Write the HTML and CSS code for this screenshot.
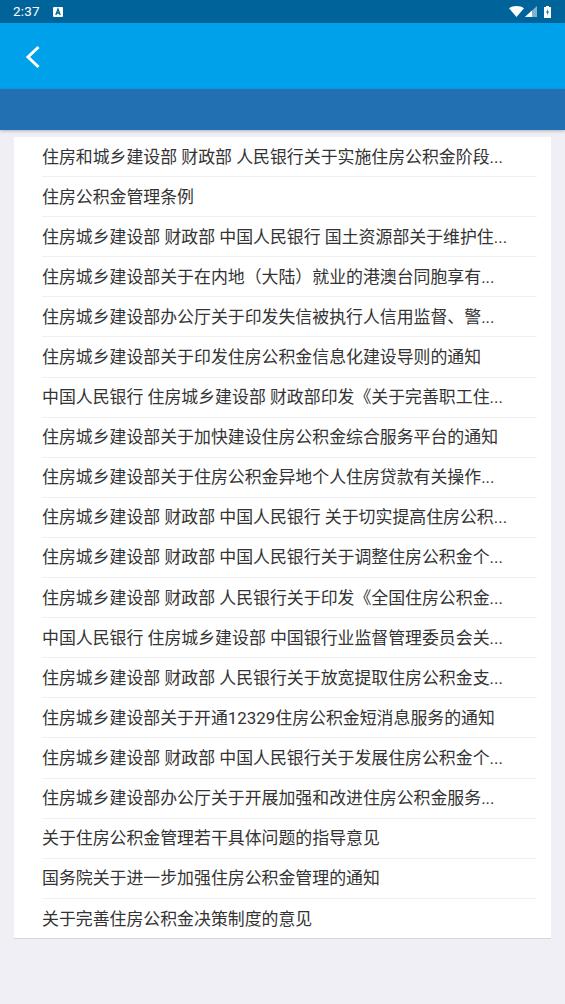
FILE: index.html
```html
<!DOCTYPE html>
<html lang="zh-CN">
<head>
<meta charset="utf-8">
<title>住房公积金政策</title>
<link rel="stylesheet" href="styles.css">
</head>
<body>
<div class="status">
  <span class="time">2:37</span>
  <svg class="a-icon" width="10" height="10" viewBox="0 0 10 10"><rect width="10" height="10" rx="1" fill="#fff"/><path d="M2.800 8 5 2.200 7.200 8M3.600 6h2.800" fill="none" stroke="#00649a" stroke-width="1.300"/></svg>
  <span class="spacer"></span>
  <svg class="wifi" width="15" height="11" viewBox="0 0 15 11"><path d="M0 2.200C2 .8 4.600 0 7.500 0s5.500.8 7.500 2.200L7.500 11z" fill="#fff"/></svg>
  <svg class="signal" width="12" height="11" viewBox="0 0 12 11"><path d="M12 0v11H0z" fill="#fff" fill-opacity=".5"/><path d="M7 4.600V11H0z" fill="#fff"/></svg>
  <svg class="battery" width="7" height="12" viewBox="0 0 7 12"><path d="M2 0h3v1h2v11H0V1h2z" fill="#fff"/><path d="M4 3 2 6.500h1.300L3 9.500l2-4H3.700z" fill="#00649a"/></svg>
</div>
<header class="toolbar">
  <svg class="back" width="16" height="24" viewBox="0 0 16 24"><path d="M13.500 2 3 12l10.500 10" fill="none" stroke="#fff" stroke-width="3"/></svg>
</header>
<div class="subbar"></div>
<main class="card">
  <ul class="list">
    <li class="row">住房和城乡建设部 财政部 人民银行关于实施住房公积金阶段...</li>
    <li class="row">住房公积金管理条例</li>
    <li class="row">住房城乡建设部 财政部 中国人民银行 国土资源部关于维护住...</li>
    <li class="row">住房城乡建设部关于在内地（大陆）就业的港澳台同胞享有...</li>
    <li class="row">住房城乡建设部办公厅关于印发失信被执行人信用监督、警...</li>
    <li class="row">住房城乡建设部关于印发住房公积金信息化建设导则的通知</li>
    <li class="row">中国人民银行 住房城乡建设部 财政部印发《关于完善职工住...</li>
    <li class="row">住房城乡建设部关于加快建设住房公积金综合服务平台的通知</li>
    <li class="row">住房城乡建设部关于住房公积金异地个人住房贷款有关操作...</li>
    <li class="row">住房城乡建设部 财政部 中国人民银行 关于切实提高住房公积...</li>
    <li class="row">住房城乡建设部 财政部 中国人民银行关于调整住房公积金个...</li>
    <li class="row">住房城乡建设部 财政部 人民银行关于印发《全国住房公积金...</li>
    <li class="row">中国人民银行 住房城乡建设部 中国银行业监督管理委员会关...</li>
    <li class="row">住房城乡建设部 财政部 人民银行关于放宽提取住房公积金支...</li>
    <li class="row">住房城乡建设部关于开通12329住房公积金短消息服务的通知</li>
    <li class="row">住房城乡建设部 财政部 中国人民银行关于发展住房公积金个...</li>
    <li class="row">住房城乡建设部办公厅关于开展加强和改进住房公积金服务...</li>
    <li class="row">关于住房公积金管理若干具体问题的指导意见</li>
    <li class="row">国务院关于进一步加强住房公积金管理的通知</li>
    <li class="row">关于完善住房公积金决策制度的意见</li>
  </ul>
</main>
</body>
</html>
```
FILE: styles.css
```css
* { box-sizing: border-box; }
html, body { margin: 0; padding: 0; }
body {
  width: 565px;
  height: 1004px;
  overflow: hidden;
  background: #efeff5;
  font-family: Roboto, "Noto Sans CJK SC", sans-serif;
}
.status {
  height: 23px;
  background: #00649a;
  display: flex;
  align-items: center;
  color: #fff;
  padding: 0 14px 0 13px;
}
.time { font-size: 13.500px; line-height: 23px; letter-spacing: .2px; }
.a-icon { margin-left: 13px; }
.spacer { flex: 1; }
.signal { margin-left: 1px; }
.battery { margin-left: 7px; }
.toolbar {
  height: 66px;
  background: #00a1eb;
  display: flex;
  align-items: center;
  padding-left: 25px;
}
.back { display: block; margin-top: 2px; }
.subbar {
  height: 41px;
  background: #2270b1;
  box-shadow: 0 1px 3px rgba(60, 70, 90, .35);
}
.card {
  width: 537px;
  height: 802px;
  margin: 7px 0 0 14px;
  background: #fff;
  border-bottom: 1px solid #d6d6da;
  padding-left: 28px;
}
.list { list-style: none; margin: 0; padding: 0; }
.row {
  height: 40.100px;
  width: 495px;
  border-bottom: 1px solid #f0f0f0;
  display: flex;
  align-items: center;
  font-size: 16.900px;
  line-height: 24px;
  color: #333;
  white-space: pre;
}
.row:last-child { border-bottom: 0; }
```
